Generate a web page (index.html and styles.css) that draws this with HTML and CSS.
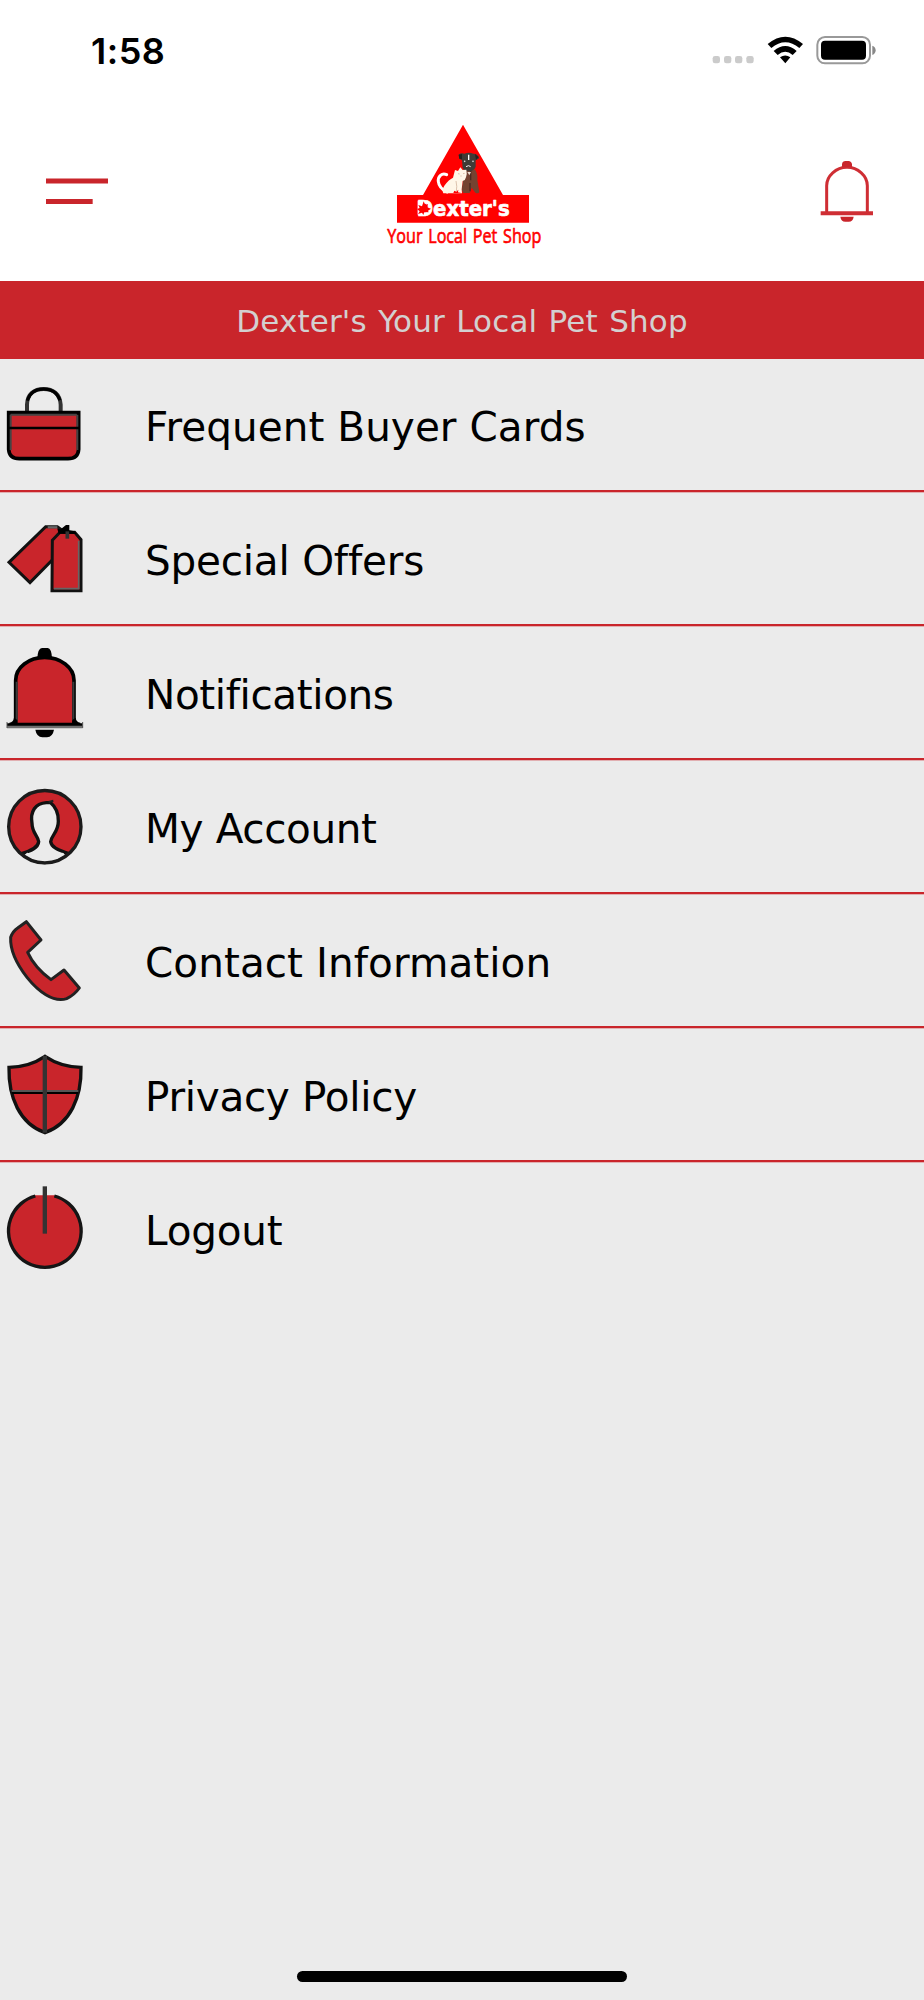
FILE: index.html
```html
<!DOCTYPE html>
<html lang="en">
<head>
<meta charset="utf-8">
<title>Dexter's Your Local Pet Shop</title>
<link rel="stylesheet" href="styles.css">
</head>
<body>
<div class="screen">
  <div class="status">
    <span class="time">1:58</span>
    <svg class="indicators" viewBox="0 0 630 180">
      <g fill="#cbcbcb"><rect x="68" y="108" width="22" height="22" rx="7"/><rect x="102" y="108" width="22" height="22" rx="7"/><rect x="135" y="108" width="22" height="22" rx="7"/><rect x="169" y="108" width="22" height="22" rx="7"/></g>
      <path d="M233 72Q286 28 339 72L328 84Q286 49 244 84ZM251 93Q286 63 320 93L308 105Q286 86 263 105ZM270 112Q286 101 301 112L286 130Z"/>
      <rect x="382" y="51" width="158" height="79" rx="23" fill="#fff" stroke="#999" stroke-width="6"/>
      <rect x="393" y="62" width="135" height="57" rx="12"/>
      <path d="M547 77Q557 81 557 91Q557 101 547 105Z" fill="#888"/>
    </svg>
  </div>
  <header class="header">
    <svg class="menu" viewBox="0 0 186 78"><path d="M0 9H186M0 70.500H140" stroke="#c9252b" stroke-width="15"/></svg>
    <svg class="logo" viewBox="0 0 570 450">
      <path d="M279 44L399 255H477V338H81V255H159Z" fill="#f00"/>
      <path d="M230 194C216 187 203 199 205 215C207 233 218 240 231 246" fill="none" stroke="#fff" stroke-width="9" stroke-linecap="round"/>
      <path d="M283 180Q298 173 316 180Q324 193 322 211L328 246Q325 252 316 248L305 233L299 249H280L275 240Z" fill="#744331"/>
      <path d="M302 183V211M300 219V244" stroke="#4b2920" stroke-width="4"/>
      <path d="M266 134Q273 127 283 131Q297 126 310 131Q323 130 328 145L317 151V170Q312 183 298 184Q283 184 278 174L276 151L268 146Z" fill="#403b36"/>
      <path d="M266 134L276 132L276 148L268 146ZM315 132L326 141L318 150Z" fill="#24201e"/>
      <path d="M296 134V150" stroke="#fff" stroke-width="4"/>
      <circle cx="284" cy="154" r="2.500" fill="#ddd"/><circle cx="309" cy="154" r="2.500" fill="#ddd"/>
      <path d="M288 170Q296 164 302 170" stroke="#f6eeee" stroke-width="3" fill="none"/>
      <path d="M292 186H303L298 196Z" fill="#eadbd0"/>
      <path d="M255 180L264 183L271 172L278 180L289 179Q292 193 288 202Q287 210 278 213L275 238L276 250H220Q215 240 223 227Q237 208 249 203Z" fill="#fff7e8"/>
      <path d="M264 191L269 192M279 191L284 190M271 198L275 198M258 213Q262 230 259 244" stroke="#c9a890" stroke-width="2" fill="none"/>
      <path d="M250 249L253 242L259 245L265 239L264 247L274 249" fill="#f00"/>
      <text class="logo-name" x="140" y="319" textLength="279" lengthAdjust="spacingAndGlyphs">Dexter's</text>
      <path d="M143 272H163V314H143Z" fill="#fff"/>
      <path d="M161 274L166 286L174 282L171 292L183 296L174 302L176 307L163 306L160 315L156 308L144 312L149 304L141 297L149 294L145 285L156 289Z" fill="#f00"/>
      <text class="logo-tag" x="52" y="398" textLength="462" lengthAdjust="spacingAndGlyphs">Your Local Pet Shop</text>
    </svg>
    <svg class="bell" viewBox="0 0 300 300">
      <path d="M80 215V137C80 108 108 82 141 82S202 108 202 137V215" fill="none" stroke="#cf2e34" stroke-width="9"/>
      <path d="M126 82V73Q127 63 137 63H145Q155 64 156 73V82ZM121 230H161Q159 245 146 245H136Q123 245 121 230ZM84 203Q84 214 71 217V221H84ZM198 203Q198 214 211 217V221H198Z" fill="#c9252b"/>
      <path d="M62 220H219" stroke="#cf2e34" stroke-width="12"/>
    </svg>
  </header>
  <h1 class="banner">Dexter's Your Local Pet Shop</h1>
  <ul class="list">
    <li class="row row-first">
      <svg class="icon" viewBox="0 -33 270 399">
        <path d="M81 126V104C82 72 103 57 131 57S180 72 182 104V126" fill="none" stroke="#333" stroke-width="12"/>
        <path d="M82 92C90 65 107 57 131 57S171 65 180 91" fill="none" stroke="#000" stroke-width="9"/>
        <path d="M26 128H236V238Q234 266 204 266H58Q28 266 26 238Z" fill="#c9252b" stroke="#000" stroke-width="11"/>
        <path d="M32 134H230M32 134V240M232 134V240" fill="none" stroke="#444" stroke-width="6"/>
        <path d="M23 174H239" stroke="#000" stroke-width="7"/>
      </svg><span class="label buyer">Frequent Buyer Cards</span></li>
    <li class="row">
      <svg class="icon" viewBox="0 366 270 402">
        <path d="M137 470H172L188 482L200 526L90 638L27 577Z" fill="#c9252b" stroke="#111" stroke-width="9"/>
        <path d="M143 472H172" stroke="#666" stroke-width="7"/>
        <path d="M157 511L180 487H224L243 509V662H156Z" fill="#c9252b" stroke="#111" stroke-width="9"/>
        <path d="M236 512V656H162" fill="none" stroke="#666" stroke-width="5"/>
        <path d="M176 491L172 476L182 478L198 465H208V481L224 484L230 492Z"/><path d="M202 484V506" stroke="#333" stroke-width="11"/>
      </svg><span class="label offers">Special Offers</span></li>
    <li class="row">
      <svg class="icon" viewBox="0 -12 270 402">
        <path d="M47 284V151C47 112 87 82 134 82S222 112 222 151V284Z" fill="#c9252b" stroke="#000" stroke-width="11"/>
        <path d="M50 155V273M220 155V273" stroke="#3b3b3b" stroke-width="6"/>
        <path d="M112 86Q113 55 126 54H143Q155 55 156 86ZM42 263Q40 277 28 278V288H52V270ZM227 263Q229 277 241 278V288H217V270ZM106 299H162Q158 321 141 322H127Q110 321 106 299Z"/>
        <path d="M21 285H248" stroke="#000" stroke-width="10"/><path d="M21 291H248" stroke="#707070" stroke-width="7"/>
        <path d="M21 276V294M248 276V294" stroke="#555" stroke-width="3"/>
      </svg><span class="label notices">Notifications</span></li>
    <li class="row">
      <svg class="icon" viewBox="0 390 270 402">
        <circle cx="134.500" cy="590" r="108" fill="#c9252b"/>
        <path d="M65 671C91 663 115 654 116 635C114 617 96 609 96 580C90 544 106 520 139 518H152Q176 538 175 574C175 607 155 614 152 635C155 654 180 661 203 670Q136 725 65 671Z" fill="#ebebeb" stroke="#111" stroke-width="10"/>
        <path d="M73 675Q135 718 196 675L188 668Q135 685 82 668Z" fill="#ebebeb"/>
        <path d="M146 516L160 512" stroke="#222" stroke-width="6"/>
        <circle cx="134.500" cy="590" r="108.500" fill="none" stroke="#1b1b1b" stroke-width="10"/>
      </svg><span class="label account">My Account</span></li>
    <li class="row">
      <svg class="icon" viewBox="0 -18 270 402">
        <path d="M79 65L123 120L83 157C98 190 126 219 153 239L192 210L238 264Q223 285 200 296C159 309 114 273 81 232C50 192 30 150 32 112Q38 94 53 84Z" fill="#c9252b" stroke="#222" stroke-width="9" stroke-linejoin="round"/>
      </svg><span class="label contact">Contact Information</span></li>
    <li class="row">
      <svg class="icon" viewBox="0 384 270 402">
        <path d="M135 469Q183 501 243 502C245 592 211 671 135 698C59 671 25 592 27 502Q88 501 135 469Z" fill="#c9252b" stroke="#111" stroke-width="10"/>
        <path d="M35 573H235" stroke="#555" stroke-width="6"/><path d="M36 579H234" stroke="#000" stroke-width="6"/>
        <path d="M134.500 468V698" stroke="#333" stroke-width="13"/>
      </svg><span class="label privacy">Privacy Policy</span></li>
    <li class="row row-last">
      <svg class="icon" viewBox="0 786 270 402">
        <path d="M106 886H163A110 110 0 1 1 106 886Z" fill="#c9252b"/>
        <path d="M163 888A109 109 0 1 1 106 888" fill="none" stroke="#151515" stroke-width="10"/>
        <path d="M134.500 859V1001" stroke="#333" stroke-width="13"/>
      </svg><span class="label logout">Logout</span></li>
  </ul>
  <div class="home"></div>
</div>
</body>
</html>
```
FILE: styles.css
```css
body { margin: 0; background: #ebebeb; }
.screen { width: 924px; height: 2000px; display: flex; flex-direction: column; background: #ebebeb; font-family: "DejaVu Sans", Verdana, sans-serif; }
.status { height: 110px; background: #fff; display: flex; justify-content: space-between; align-items: flex-start; box-sizing: border-box; padding: 20px 24px 0 91px; }
.time { font: 600 36px/62px Inter, sans-serif; letter-spacing: 0.5px; }
.indicators { width: 210px; height: 60px; }
.header { height: 171px; background: #fff; display: flex; justify-content: space-between; align-items: flex-start; box-sizing: border-box; padding: 0 24px 0 46px; }
.menu { width: 62px; height: 26px; margin-top: 68px; }
.logo { width: 190px; height: 150px; margin-left: 22px; }
.logo-name { font: 700 66px "DejaVu Sans", sans-serif; fill: #fff; stroke: #fff; stroke-width: 2px; stroke-linejoin: round; }
.logo-tag { font: 500 62px "Open Sans", sans-serif; word-spacing: 6px; fill: #f00; stroke: #f00; stroke-width: 2px; stroke-linejoin: round; }
.bell { width: 100px; height: 100px; margin-top: 30px; }
.banner { margin: 0; height: 78px; background: #c9252b; color: #d3d0d0; font-size: 31px; font-weight: 400; line-height: 80px; text-align: center; letter-spacing: 0.15px; word-spacing: 1.3px; }
.list { margin: 0; padding: 0; list-style: none; }
.row { height: 134px; box-sizing: border-box; border-bottom: 2px solid #c9252b; box-shadow: 0 1px rgba(201, 37, 43, 0.3); display: flex; }
.row-first { height: 133px; }
.row-last { border-bottom: 0; box-shadow: none; }
.icon { width: 90px; height: 134px; flex: none; }
.row-first .icon { height: 133px; }
.label { margin-left: 55px; font-size: 40.5px; line-height: 138px; white-space: nowrap; }
.row-first .label { line-height: 136px; }
.buyer { letter-spacing: 0.06px; }
.offers { letter-spacing: -0.2px; }
.notices { letter-spacing: -0.38px; }
.account { letter-spacing: -0.38px; }
.contact { letter-spacing: 0.07px; }
.privacy { letter-spacing: -0.3px; }
.logout { letter-spacing: -0.2px; }
.home { width: 330px; height: 11px; border-radius: 6px; background: #000; margin: auto auto 18px; }
```
